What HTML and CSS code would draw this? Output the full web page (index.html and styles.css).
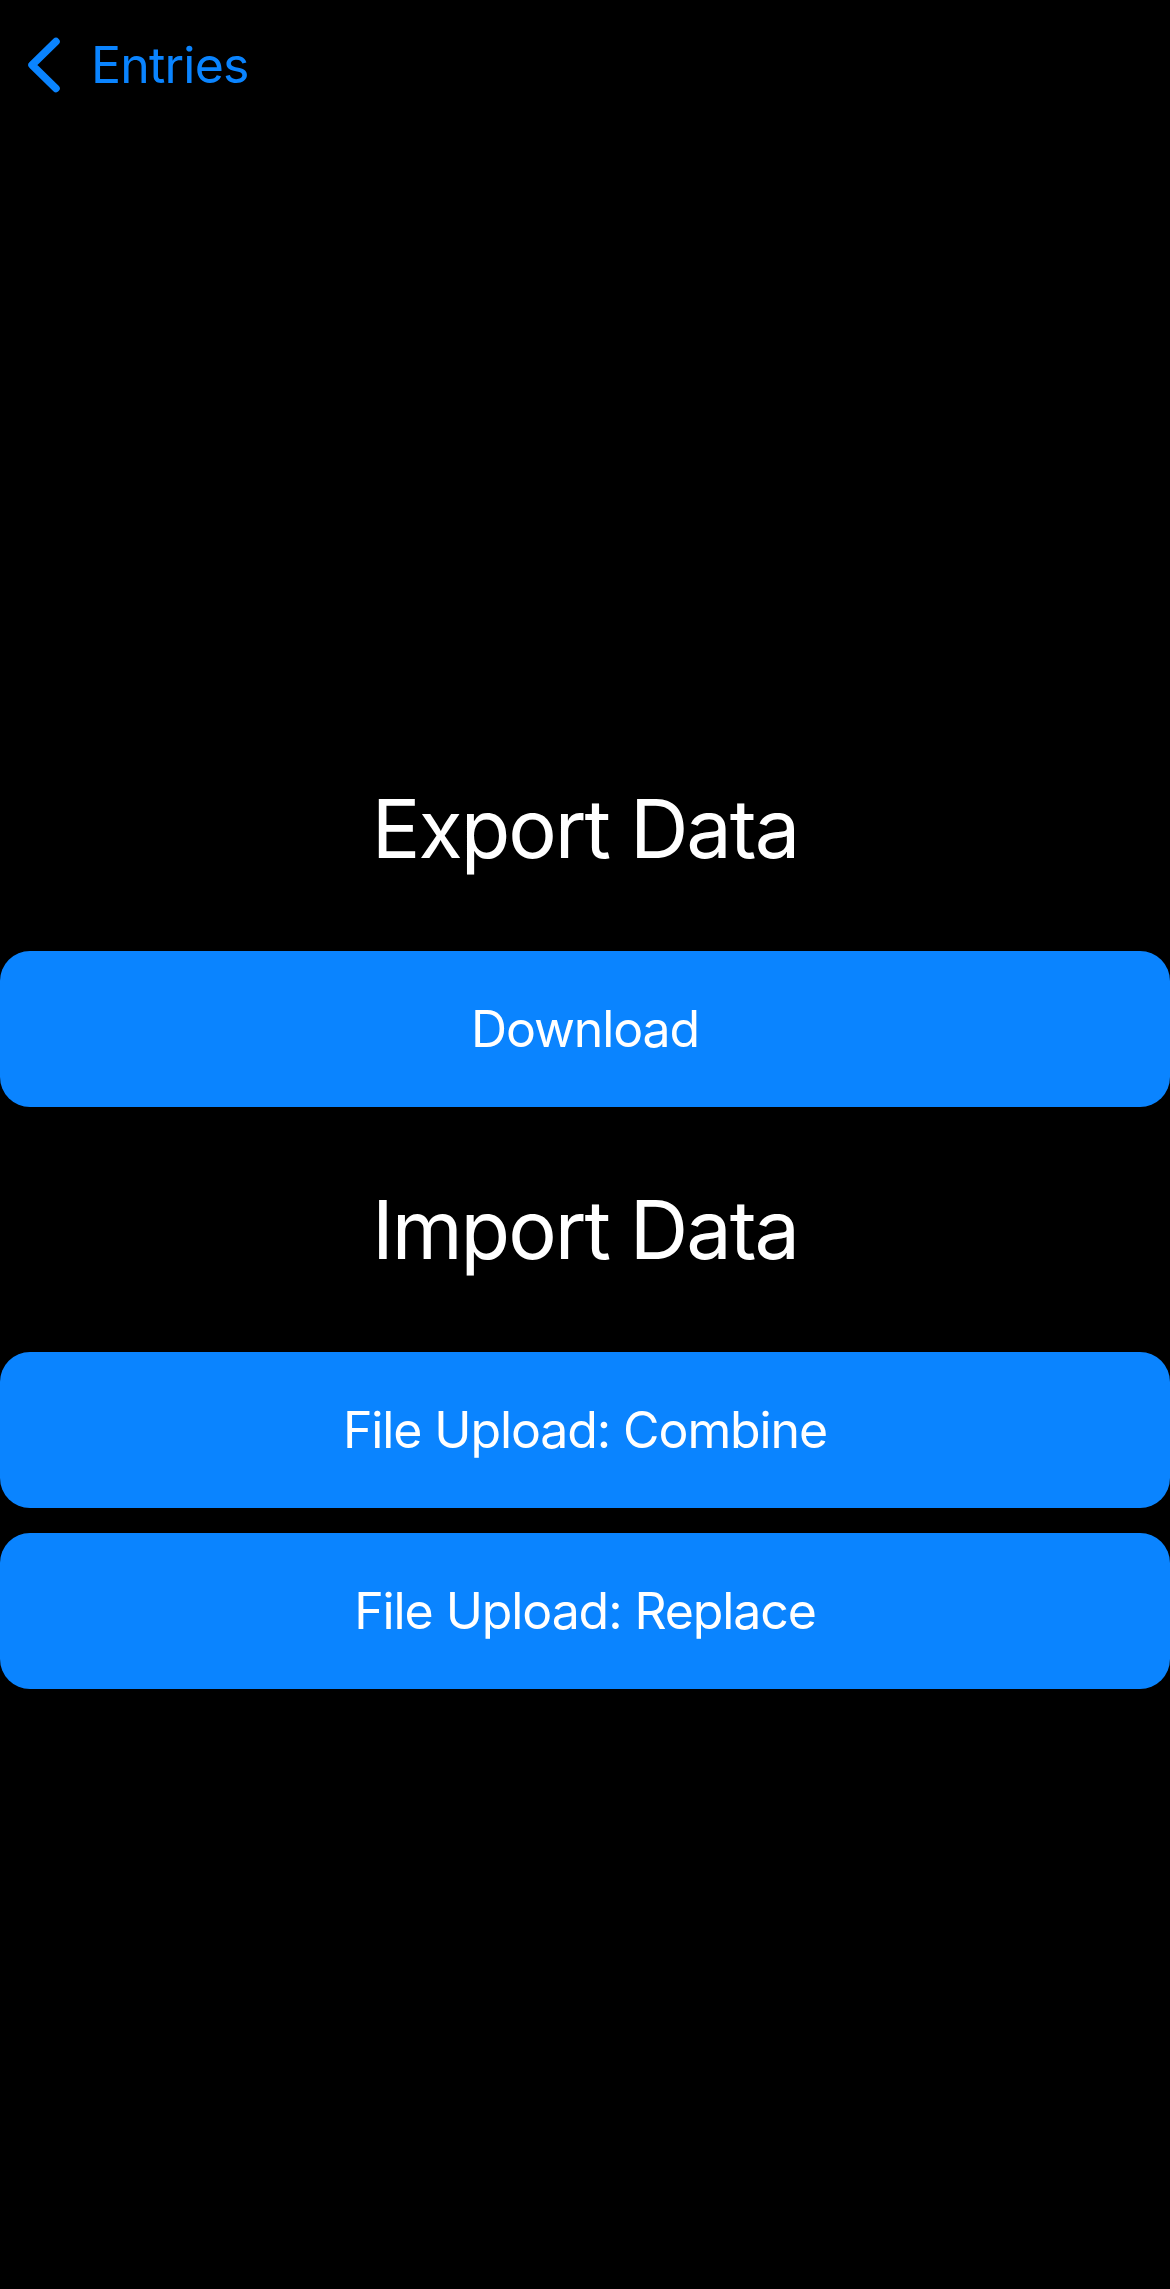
FILE: index.html
```html
<!DOCTYPE html>
<html lang="en">
<head>
<meta charset="utf-8">
<title>Data</title>
<link rel="stylesheet" href="styles.css">
</head>
<body>
<nav class="nav">
  <svg class="chevron" width="40" height="64" viewBox="0 0 40 64" aria-hidden="true">
    <path d="M32 8.5 L8 32 L32 55.5" fill="none" stroke="#0A84FF" stroke-width="7.5" stroke-linecap="round" stroke-linejoin="round"/>
  </svg>
  <span class="nav-title">Entries</span>
</nav>
<main class="content">
  <h1 class="heading">Export Data</h1>
  <button class="btn">Download</button>
  <h1 class="heading heading-second">Import Data</h1>
  <div class="btn-group">
    <button class="btn">File Upload: Combine</button>
    <button class="btn">File Upload: Replace</button>
  </div>
</main>
</body>
</html>
```

FILE: styles.css
```css
html, body {
  margin: 0;
  padding: 0;
  background: #000;
}
body {
  width: 1170px;
  height: 2289px;
  font-family: Inter, "Noto Sans", "Liberation Sans", sans-serif;
  color: #fff;
  overflow: hidden;
}
.nav {
  display: flex;
  align-items: center;
  height: 130px;
  padding-left: 24px;
}
.chevron {
  display: block;
  flex: none;
}
.nav-title {
  margin-left: 27px;
  font-size: 50px;
  line-height: 60px;
  color: #0A84FF;
  letter-spacing: -0.8px;
}
.content {
  display: flex;
  flex-direction: column;
  margin-top: 649px;
}
.heading {
  margin: 0 0 72px;
  font-size: 81px;
  font-weight: 400;
  line-height: 100px;
  height: 100px;
  text-align: center;
  letter-spacing: -2px;
}
.heading-second {
  margin-top: 73px;
}
.btn-group {
  display: flex;
  flex-direction: column;
  gap: 25px;
}
.btn {
  display: flex;
  align-items: center;
  justify-content: center;
  width: 1170px;
  height: 156px;
  margin: 0;
  padding: 0;
  border: none;
  border-radius: 30px;
  background: #0A84FF;
  color: #fff;
  font-family: inherit;
  font-size: 50px;
  font-weight: 400;
  letter-spacing: -1.1px;
}
```
